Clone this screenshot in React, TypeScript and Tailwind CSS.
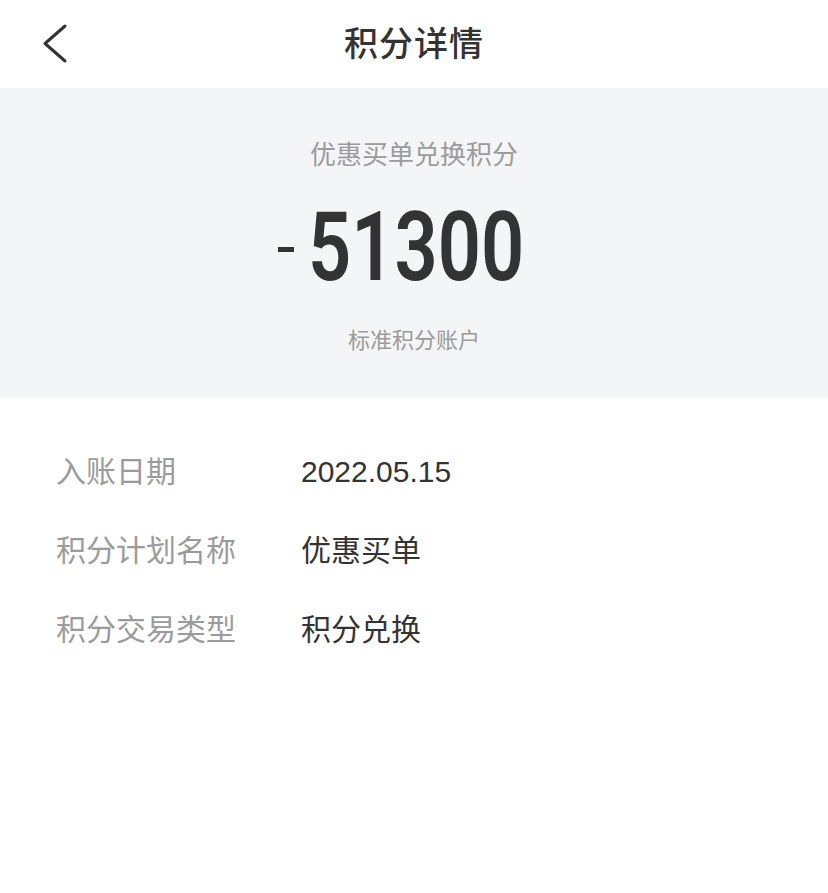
const FONT = { fontFamily: '"Liberation Sans", "Noto Sans CJK SC", sans-serif' };

const ROWS = [
  { label: "入账日期", value: "2022.05.15" },
  { label: "积分计划名称", value: "优惠买单" },
  { label: "积分交易类型", value: "积分兑换" },
];

function BackIcon() {
  return (
    <svg width="30" height="46" viewBox="0 0 30 46" fill="none">
      <path
        d="M25 5 L5 22.5 L25 40"
        stroke="#333333"
        strokeWidth="3"
        strokeLinecap="round"
        strokeLinejoin="round"
      />
    </svg>
  );
}

export default function App() {
  return (
    <div className="w-[828px] min-h-[893px] bg-white" style={FONT}>
      {/* 顶部导航 */}
      <div className="h-[88px] grid grid-cols-[1fr_auto_1fr] items-center">
        <div className="pl-[40px] flex items-center">
          <BackIcon />
        </div>
        <h1 className="text-[34px] leading-[40px] font-medium text-[#333333] tracking-[1px]">
          积分详情
        </h1>
        <div />
      </div>

      {/* 积分摘要 */}
      <div className="h-[310px] bg-[#f4f5f7] flex flex-col items-center pt-[49px]">
        <p className="text-[26px] leading-[36px] text-[#9b9b9b]">优惠买单兑换积分</p>
        <div className="mt-[24px] h-[100px] flex items-center pr-[30px]">
          <span className="w-[16px] h-[5px] bg-[#333333] mr-[14px] mt-[4px]" />
          <span className="inline-block w-[213px] whitespace-nowrap">
            <span
              className="inline-block origin-left scale-x-[0.78] text-[97px] leading-[100px] font-semibold text-[#333333]"
              style={{ fontFamily: "Roboto, sans-serif" }}
            >
              51300
            </span>
          </span>
        </div>
        <p className="mt-[29px] text-[22px] leading-[30px] text-[#9b9b9b]">标准积分账户</p>
      </div>

      {/* 明细 */}
      <div className="pt-[34px]">
        {ROWS.map((row) => (
          <div key={row.label} className="h-[79px] flex items-center pl-[56px]">
            <span className="w-[245px] text-[30px] text-[#9b9b9b]">{row.label}</span>
            <span className="text-[30px] text-[#333333]">{row.value}</span>
          </div>
        ))}
      </div>
    </div>
  );
}
